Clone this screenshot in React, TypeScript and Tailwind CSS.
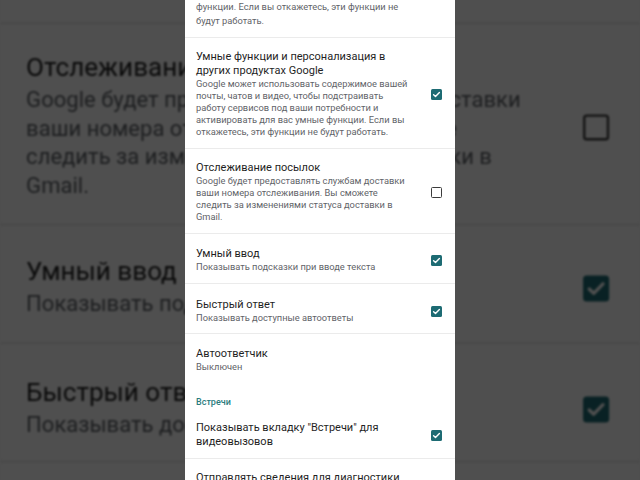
import React from 'react';

type RowProps = {
  title: string[];
  body?: string[];
  checked?: boolean;
  last?: boolean;
  className?: string;
};

function Checkbox({ checked }: { checked: boolean }) {
  if (!checked) {
    return <div className="w-[11px] h-[11px] shrink-0 rounded-[1.5px] border-[1.5px] border-[#3c3c3c]" />;
  }
  return (
    <div className="w-[11px] h-[11px] shrink-0 rounded-[1.5px] bg-[#1d6b73] flex items-center justify-center">
      <svg width="9" height="9" viewBox="0 0 9 9" fill="none">
        <path d="M1.6 4.7 L3.5 6.5 L7.4 2.5" stroke="white" strokeWidth="1.4" strokeLinecap="round" strokeLinejoin="round" />
      </svg>
    </div>
  );
}

function Row({ title, body = [], checked, last, className = 'pt-3 pb-[10px]' }: RowProps) {
  return (
    <div className={`flex items-center pl-[11px] pr-[13px] ${last ? '' : 'border-b border-[#ebebeb]'} ${className}`}>
      <div className="flex-1 min-w-0">
        {title.map((t) => (
          <div key={t} className="text-[11px] leading-[14px] text-[#1f1f1f] whitespace-nowrap">
            {t}
          </div>
        ))}
        {body.map((b) => (
          <div key={b} className="text-[9.3px] leading-[12px] text-[#5f6368] whitespace-nowrap">
            {b}
          </div>
        ))}
      </div>
      {checked !== undefined && <Checkbox checked={checked} />}
    </div>
  );
}

function Screen() {
  return (
    <div className="w-[270px] h-[480px] bg-white overflow-hidden font-['Roboto',sans-serif]">
      <div className="pl-[11px] pb-[9px] border-b border-[#ebebeb]">
        <div className="text-[9.3px] leading-[14px] text-[#5f6368]">функции. Если вы откажетесь, эти функции не</div>
        <div className="text-[9.3px] leading-[14px] text-[#5f6368]">будут работать.</div>
      </div>
      <Row
        title={['Умные функции и персонализация в', 'других продуктах Google']}
        body={[
          'Google может использовать содержимое вашей',
          'почты, чатов и видео, чтобы подстраивать',
          'работу сервисов под ваши потребности и',
          'активировать для вас умные функции. Если вы',
          'откажетесь, эти функции не будут работать.',
        ]}
        checked
      />
      <Row
        title={['Отслеживание посылок']}
        body={[
          'Google будет предоставлять службам доставки',
          'ваши номера отслеживания. Вы сможете',
          'следить за изменениями статуса доставки в',
          'Gmail.',
        ]}
        checked={false}
      />
      <Row title={['Умный ввод']} body={['Показывать подсказки при вводе текста']} checked className="pt-[13px] pb-[10px]" />
      <Row title={['Быстрый ответ']} body={['Показывать доступные автоответы']} checked className="pt-[14px] pb-[9px]" />
      <Row title={['Автоответчик']} body={['Выключен']} last className="pt-[13px] pb-[10px]" />
      <div className="pl-[11px] pt-[13px] text-[9px] leading-[12px] font-medium text-[#2a7b7c]">Встречи</div>
      <Row
        title={['Показывать вкладку "Встречи" для', 'видеовызовов']}
        checked
        className="pt-[13px] pb-[9px]"
      />
      <Row title={['Отправлять сведения для диагностики']} last className="pt-3" />
    </div>
  );
}

export default function App() {
  return (
    <div className="relative w-[640px] h-[480px] overflow-hidden bg-[#4f4f4f]">
      <div className="absolute inset-0 flex items-center justify-center" aria-hidden="true">
        <div className="shrink-0 scale-[2.37] brightness-[0.31] blur-[0.5px]">
          <Screen />
        </div>
      </div>
      <div className="relative flex justify-center">
        <Screen />
      </div>
    </div>
  );
}
